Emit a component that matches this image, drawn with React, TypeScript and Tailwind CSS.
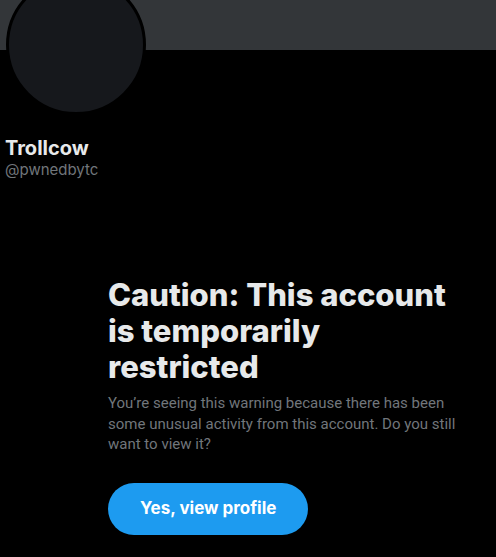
export default function App() {
  return (
    <main className="min-h-screen w-full bg-black font-['Inter',_'Noto_Sans',_sans-serif] text-[#e7e9ea]">
      <div className="h-[50px] bg-[#333639]" />
      <div className="pl-[6px]">
        <div className="-mt-[75px] h-[140px] w-[140px] rounded-full border-[3px] border-black bg-[#16181c]" />
      </div>
      <div className="mt-[21px] pl-[5px]">
        <div className="text-[20px] leading-[24px] font-bold">Trollcow</div>
        <div className="text-[15px] leading-[20px] text-[#71767b]">@pwnedbytc</div>
      </div>
      <section className="mt-[97px] w-[364px] ml-[108px]">
        <h2 className="text-[31px] leading-[36px] font-extrabold">
          Caution: This account is temporarily restricted
        </h2>
        <p className="mt-[8px] font-['Roboto',_sans-serif] text-[15px] leading-[20.5px] text-[#71767b]">
          You’re seeing this warning because there has been some unusual activity
          from this account. Do you still want to view it?
        </p>
        <button className="mt-[28px] h-[52px] rounded-full bg-[#1d9bf0] px-[32px] text-[17px] font-bold text-white">
          Yes, view profile
        </button>
      </section>
    </main>
  );
}
